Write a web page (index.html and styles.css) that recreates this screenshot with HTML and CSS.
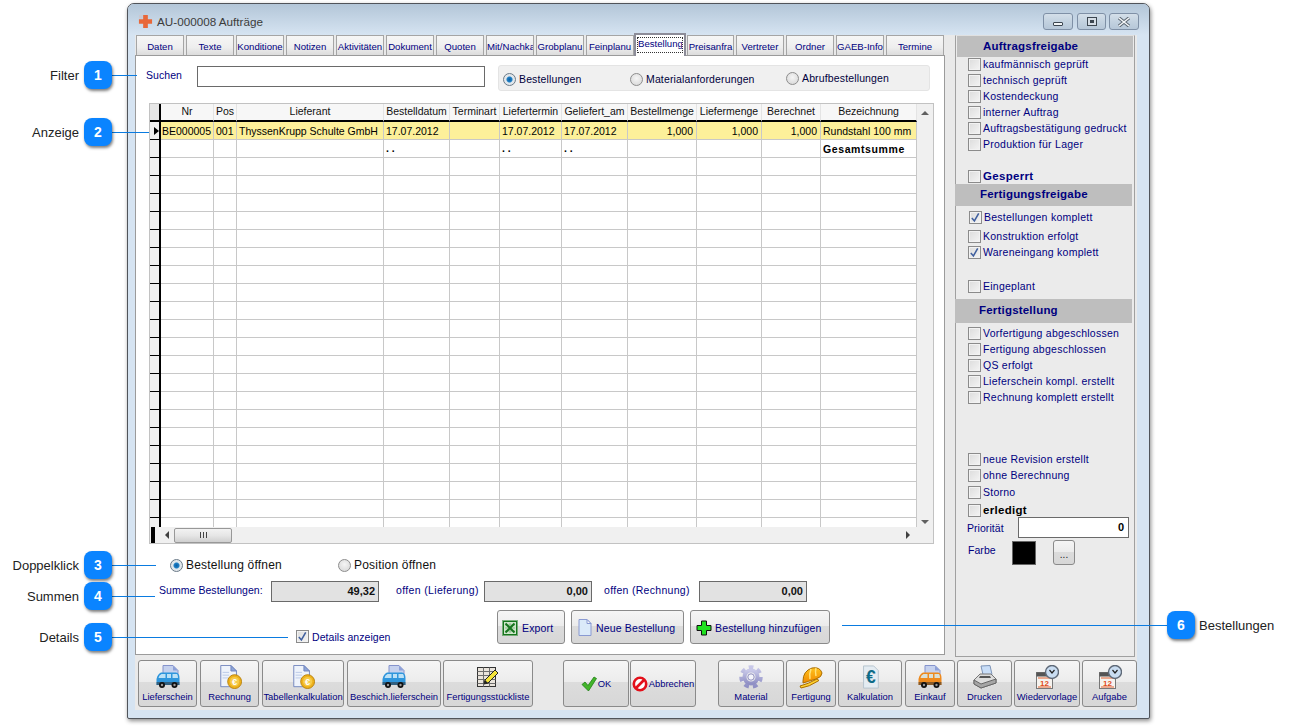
FILE: index.html
```html
<!DOCTYPE html>
<html lang="de">
<head>
<meta charset="utf-8">
<title>AU-000008 Aufträge</title>
<link rel="stylesheet" href="styles.css">
</head>
<body>
<svg class="sprite" aria-hidden="true">
  <defs>
    <linearGradient id="g-gear" x1="0" y1="0" x2="0" y2="1"><stop offset="0" stop-color="#c8c8e8"/><stop offset="1" stop-color="#8f8fc4"/></linearGradient>
    <linearGradient id="g-helmet" x1="0" y1="0" x2="0" y2="1"><stop offset="0" stop-color="#ffc21e"/><stop offset="1" stop-color="#f08a00"/></linearGradient>
  </defs>
  <symbol id="i-van" viewBox="0 0 24 24"><path d="M7 .5h10l5 5v12H7z" fill="#c5d1ee" stroke="#8593cc"/><path d="M17 .5v5h5z" fill="#8ea1d8"/><path d="M.5 14Q1.500 9 5 7.500H20Q23.500 8 23.500 13V20H.5z" fill="currentColor"/><path d="M5.500 9H9.500V13H2.500Q3 10 5.500 9zM11 9h4v4h-4zM16.500 9h4.500q1 1 1 4h-5.500z" fill="#d5eefa" opacity=".85"/><path d="M.5 17h23v3H.5z" fill="#333" opacity=".55"/><circle cx="6" cy="20" r="3" fill="#111"/><circle cx="18.500" cy="20" r="3" fill="#111"/><circle cx="6" cy="20" r="1.200" fill="#999"/><circle cx="18.500" cy="20" r="1.200" fill="#999"/></symbol>
  <symbol id="i-sheet" viewBox="0 0 24 24"><rect x="1.500" y="2.500" width="18" height="19" fill="#e9e4dc" stroke="#333"/><path d="M1.500 6.500h18M1.500 10.500h18M1.500 14.500h18M1.500 18.500h18M7.500 2.500v19M13.500 2.500v19" stroke="#6d6d6d" fill="none"/><path d="M8 19l1-4L19 5l3 3L12 18z" fill="#f2e23a" stroke="#222"/><path d="M8 19l1-4 3 3z" fill="#222"/></symbol>
  <symbol id="i-check" viewBox="0 0 16 16"><path d="M1 8.500l3-2.500 3 3.500L13 1l2.500 1.500L7.500 15z" fill="#43b52a" stroke="#1f7d17" stroke-width=".8"/></symbol>
  <symbol id="i-no" viewBox="0 0 16 16"><circle cx="8" cy="8" r="6.200" fill="#fff" stroke="#e3101a" stroke-width="2.600"/><path d="M3.500 12.500l9-9" stroke="#e3101a" stroke-width="2.600"/></symbol>
  <symbol id="i-gear" viewBox="0 0 24 24"><circle cx="12" cy="12" r="9.500" fill="none" stroke="url(#g-gear)" stroke-width="4.500" stroke-dasharray="4.500 3.960"/><circle cx="12" cy="12" r="6.500" fill="none" stroke="url(#g-gear)" stroke-width="4"/><circle cx="12" cy="12" r="3.200" fill="#f4f4fa" stroke="#8e8ebe"/></symbol>
  <symbol id="i-helmet" viewBox="0 0 24 24"><path d="M4 16Q4 6 13 3Q21 1.500 23 8Q23 12 17 14Q9 16.500 4 18z" fill="url(#g-helmet)" stroke="#a96d00"/><path d="M1 21Q9 19 18 14L20 15.500Q10 22 2 23z" fill="#ffd230" stroke="#a96d00"/><path d="M12 4Q10 9 11 14M17 3Q16 6 17 11" stroke="#ffe27a" stroke-width="1.500" fill="none"/></symbol>
  <symbol id="i-printer" viewBox="0 0 24 24"><path d="M8 1l9-.5 2 9H10z" fill="#c9def8" stroke="#7e95b8"/><path d="M1 15l6-6h11l5 5v4L8 23l-7-4z" fill="#dcdcdc" stroke="#777"/><path d="M1 15l7 4 15-5v4L8 23l-7-4z" fill="#a5a5a5" stroke="#666"/><path d="M7 11h10l1 2H6z" fill="#555"/></symbol>
  <symbol id="i-xls" viewBox="0 0 16 16"><rect x=".5" y=".5" width="15" height="15" fill="#cfe6cc" stroke="#16761e" stroke-dasharray="1 1"/><rect x="1.500" y="1.500" width="13" height="13" fill="none" stroke="#16761e"/><path d="M3 5h10M3 8h10M3 11h10M8 3v10" stroke="#8dbc8d"/><path d="M3.500 3.500l9 9M12.500 3.500l-9 9" stroke="#16761e" stroke-width="2"/></symbol>
  <symbol id="i-page" viewBox="0 0 14 17"><path d="M1 .5h8l4 4v12H1z" fill="#dbeaf9" stroke="#8a9ad2"/><path d="M9 .5v4h4z" fill="#f4f8fd" stroke="#8a9ad2"/></symbol>
  <symbol id="i-plus" viewBox="0 0 16 16"><path d="M5.500 1h5v4.500H15v5h-4.500V15h-5v-4.500H1v-5h4.500z" fill="#1fe21f" stroke="#111"/></symbol>
  <symbol id="i-tick" viewBox="0 0 12 12"><path d="M2 6.500l2.800 3.200L9.500 1.500" fill="none" stroke="#41609f" stroke-width="1.700"/></symbol>
  <symbol id="i-logo" viewBox="0 0 16 16"><path d="M5.500 1h5v4.500H15v5h-4.500V15h-5v-4.500H1v-5h4.500z" fill="#e8683a"/><path d="M1 1h4v4H1z" fill="#c9c9d2"/></symbol>
  <symbol id="i-close" viewBox="0 0 14 10"><path d="M2 1l10 8M12 1L2 9" stroke="#5a6570" stroke-width="3.400" fill="none"/><path d="M2 1l10 8M12 1L2 9" stroke="#f4f6f8" stroke-width="1.600" fill="none"/></symbol>
</svg>

<main class="desktop">
  <section class="window">
    <header class="titlebar">
      <svg class="logo"><use href="#i-logo"/></svg>
      <span class="title">AU-000008 Aufträge</span>
      <div class="winctrls">
        <span class="winbtn"><span class="glyph-min"></span></span>
        <span class="winbtn winbtn-mid"><span class="glyph-max"></span></span>
        <span class="winbtn"><svg class="glyph-close"><use href="#i-close"/></svg></span>
      </div>
    </header>

    <div class="client">
    <div class="main">
      <div class="leftpane">
        <nav class="tabs">
          <span class="tab">Daten</span><span class="tab">Texte</span><span class="tab">Konditione</span><span class="tab">Notizen</span><span class="tab">Aktivitäten</span><span class="tab">Dokument</span><span class="tab">Quoten</span><span class="tab">Mit/Nachka</span><span class="tab">Grobplanu</span><span class="tab">Feinplanu</span><span class="tab tab-active"><span class="tab-focus">Bestellung</span></span><span class="tab tab-after">Preisanfra</span><span class="tab">Vertreter</span><span class="tab">Ordner</span><span class="tab">GAEB-Info</span><span class="tab tab-last">Termine</span>
        </nav>
        <div class="tabpanel">
          <div class="filter">
            <span class="lbl suchen">Suchen</span>
            <span class="input search"></span>
            <div class="radiogroup">
              <span class="radio-item ri1"><span class="radio on"></span><span class="navy-ish">Bestellungen</span></span>
              <span class="radio-item ri2"><span class="radio"></span><span class="navy-ish">Materialanforderungen</span></span>
              <span class="radio-item ri3"><span class="radio"></span><span class="navy-ish">Abrufbestellungen</span></span>
            </div>
          </div>

          <div class="grid">
            <div class="grid-top">
              <div class="grid-clip">
                <table class="table">
                  <colgroup><col class="c-h"><col class="c-nr"><col class="c-pos"><col class="c-lief"><col class="c-bd"><col class="c-ta"><col class="c-lt"><col class="c-ga"><col class="c-bm"><col class="c-lm"><col class="c-be"><col class="c-bz"></colgroup>
                  <thead><tr><th class="rh"></th><th>Nr</th><th>Pos</th><th>Lieferant</th><th>Bestelldatum</th><th>Terminart</th><th>Liefertermin</th><th>Geliefert_am</th><th>Bestellmenge</th><th>Liefermenge</th><th>Berechnet</th><th>Bezeichnung</th></tr></thead>
                  <tbody>
                    <tr class="sel"><td class="rh"><span class="arrow"></span></td><td class="first">BE000005</td><td>001</td><td>ThyssenKrupp Schulte GmbH</td><td>17.07.2012</td><td></td><td>17.07.2012</td><td>17.07.2012</td><td class="num">1,000</td><td class="num">1,000</td><td class="num">1,000</td><td>Rundstahl 100 mm</td></tr>
                    <tr><td class="rh"></td><td></td><td></td><td></td><td class="dots">. .</td><td></td><td class="dots">. .</td><td class="dots">. .</td><td></td><td></td><td></td><td class="total">Gesamtsumme</td></tr>
                    <tr><td class="rh"></td><td></td><td></td><td></td><td></td><td></td><td></td><td></td><td></td><td></td><td></td><td></td></tr>
                    <tr><td class="rh"></td><td></td><td></td><td></td><td></td><td></td><td></td><td></td><td></td><td></td><td></td><td></td></tr>
                    <tr><td class="rh"></td><td></td><td></td><td></td><td></td><td></td><td></td><td></td><td></td><td></td><td></td><td></td></tr>
                    <tr><td class="rh"></td><td></td><td></td><td></td><td></td><td></td><td></td><td></td><td></td><td></td><td></td><td></td></tr>
                    <tr><td class="rh"></td><td></td><td></td><td></td><td></td><td></td><td></td><td></td><td></td><td></td><td></td><td></td></tr>
                    <tr><td class="rh"></td><td></td><td></td><td></td><td></td><td></td><td></td><td></td><td></td><td></td><td></td><td></td></tr>
                    <tr><td class="rh"></td><td></td><td></td><td></td><td></td><td></td><td></td><td></td><td></td><td></td><td></td><td></td></tr>
                    <tr><td class="rh"></td><td></td><td></td><td></td><td></td><td></td><td></td><td></td><td></td><td></td><td></td><td></td></tr>
                    <tr><td class="rh"></td><td></td><td></td><td></td><td></td><td></td><td></td><td></td><td></td><td></td><td></td><td></td></tr>
                    <tr><td class="rh"></td><td></td><td></td><td></td><td></td><td></td><td></td><td></td><td></td><td></td><td></td><td></td></tr>
                    <tr><td class="rh"></td><td></td><td></td><td></td><td></td><td></td><td></td><td></td><td></td><td></td><td></td><td></td></tr>
                    <tr><td class="rh"></td><td></td><td></td><td></td><td></td><td></td><td></td><td></td><td></td><td></td><td></td><td></td></tr>
                    <tr><td class="rh"></td><td></td><td></td><td></td><td></td><td></td><td></td><td></td><td></td><td></td><td></td><td></td></tr>
                    <tr><td class="rh"></td><td></td><td></td><td></td><td></td><td></td><td></td><td></td><td></td><td></td><td></td><td></td></tr>
                    <tr><td class="rh"></td><td></td><td></td><td></td><td></td><td></td><td></td><td></td><td></td><td></td><td></td><td></td></tr>
                    <tr><td class="rh"></td><td></td><td></td><td></td><td></td><td></td><td></td><td></td><td></td><td></td><td></td><td></td></tr>
                    <tr><td class="rh"></td><td></td><td></td><td></td><td></td><td></td><td></td><td></td><td></td><td></td><td></td><td></td></tr>
                    <tr><td class="rh"></td><td></td><td></td><td></td><td></td><td></td><td></td><td></td><td></td><td></td><td></td><td></td></tr>
                    <tr><td class="rh"></td><td></td><td></td><td></td><td></td><td></td><td></td><td></td><td></td><td></td><td></td><td></td></tr>
                    <tr><td class="rh"></td><td></td><td></td><td></td><td></td><td></td><td></td><td></td><td></td><td></td><td></td><td></td></tr>
                    <tr><td class="rh"></td><td></td><td></td><td></td><td></td><td></td><td></td><td></td><td></td><td></td><td></td><td></td></tr>
                  </tbody>
                </table>
              </div>
              <div class="vscroll"><span class="tri tri-up"></span><span class="tri tri-down"></span></div>
            </div>
            <div class="hscroll">
              <span class="hs-block"></span>
              <span class="tri tri-left"></span>
              <span class="thumb"><span class="grip"></span></span>
              <span class="tri tri-right"></span>
            </div>
          </div>

          <div class="dbl">
            <span class="dbl-item di1"><span class="radio on"></span>Bestellung öffnen</span>
            <span class="dbl-item"><span class="radio"></span>Position öffnen</span>
          </div>

          <div class="sums">
            <span class="lbl s-l1">Summe Bestellungen:</span>
            <span class="sumbox">49,32</span>
            <span class="lbl s-l2">offen (Lieferung)</span>
            <span class="sumbox">0,00</span>
            <span class="lbl s-l3">offen (Rechnung)</span>
            <span class="sumbox">0,00</span>
          </div>

          <div class="actions">
            <span class="details"><span class="cb"><svg class="tick"><use href="#i-tick"/></svg></span><span class="lbl">Details anzeigen</span></span>
            <span class="btn act a-export"><svg class="ico16"><use href="#i-xls"/></svg>Export</span>
            <span class="btn act a-new"><svg class="ico-page"><use href="#i-page"/></svg>Neue Bestellung</span>
            <span class="btn act a-add"><svg class="ico16"><use href="#i-plus"/></svg>Bestellung hinzufügen</span>
          </div>
        </div>
      </div>

      <aside class="side">
        <h3 class="sh sh1">Auftragsfreigabe</h3>
        <div class="cbrow up1"><span class="cb"></span>kaufmännisch geprüft</div>
        <div class="cbrow"><span class="cb"></span>technisch geprüft</div>
        <div class="cbrow"><span class="cb"></span>Kostendeckung</div>
        <div class="cbrow"><span class="cb"></span>interner Auftrag</div>
        <div class="cbrow"><span class="cb"></span>Auftragsbestätigung gedruckt</div>
        <div class="cbrow"><span class="cb"></span>Produktion für Lager</div>
        <div class="cbrow big m16"><span class="cb"></span>Gesperrt</div>
        <h3 class="sh sh2">Fertigungsfreigabe</h3>
        <div class="cbrow ind m3"><span class="cb"><svg class="tick"><use href="#i-tick"/></svg></span>Bestellungen komplett</div>
        <div class="cbrow m3"><span class="cb"></span>Konstruktion erfolgt</div>
        <div class="cbrow"><span class="cb"><svg class="tick"><use href="#i-tick"/></svg></span>Wareneingang komplett</div>
        <div class="cbrow m18"><span class="cb"></span>Eingeplant</div>
        <h3 class="sh sh3">Fertigstellung</h3>
        <div class="cbrow m2"><span class="cb"></span>Vorfertigung abgeschlossen</div>
        <div class="cbrow"><span class="cb"></span>Fertigung abgeschlossen</div>
        <div class="cbrow"><span class="cb"></span>QS erfolgt</div>
        <div class="cbrow"><span class="cb"></span>Lieferschein kompl. erstellt</div>
        <div class="cbrow"><span class="cb"></span>Rechnung komplett erstellt</div>
        <div class="cbrow m46"><span class="cb"></span>neue Revision erstellt</div>
        <div class="cbrow"><span class="cb"></span>ohne Berechnung</div>
        <div class="cbrow m1"><span class="cb"></span>Storno</div>
        <div class="cbrow big black m2"><span class="cb"></span>erledigt</div>
        <div class="prio"><span class="lbl">Priorität</span><span class="input prio-in">0</span></div>
        <div class="farbe"><span class="lbl">Farbe</span><span class="swatch"></span><span class="btn more">...</span></div>
      </aside>
    </div>

    <footer class="toolbar">
      <span class="btn tb w59 van-blue"><svg class="tico"><use href="#i-van"/></svg>Lieferschein</span>
      <span class="btn tb w59 g3"><svg class="tico" viewBox="0 0 24 26"><path d="M2 .5h11l6 6v17H2z" fill="#eef3fb" stroke="#6f83bd"/><path d="M13 .5v6h6z" fill="#8ea6d9" stroke="#6f83bd"/><path d="M4 8h7M4 11h7M4 14h6" stroke="#b9c8e6"/><circle cx="17" cy="18" r="7.500" fill="#eeb21c" stroke="#b77f08"/><circle cx="17" cy="18" r="5" fill="#f6cb4a"/><text x="17" y="21.500" class="svg-euro">€</text></svg>Rechnung</span>
      <span class="btn tb w82 g3"><svg class="tico" viewBox="0 0 24 26"><path d="M2 .5h11l6 6v17H2z" fill="#eef3fb" stroke="#6f83bd"/><path d="M13 .5v6h6z" fill="#8ea6d9" stroke="#6f83bd"/><path d="M4 8h7M4 11h7M4 14h6" stroke="#b9c8e6"/><circle cx="17" cy="18" r="7.500" fill="#eeb21c" stroke="#b77f08"/><circle cx="17" cy="18" r="5" fill="#f6cb4a"/><text x="17" y="21.500" class="svg-euro">€</text></svg>Tabellenkalkulation</span>
      <span class="btn tb w94 g3 van-blue"><svg class="tico"><use href="#i-van"/></svg>Beschich.lieferschein</span>
      <span class="btn tb w90"><svg class="tico"><use href="#i-sheet"/></svg>Fertigungsstückliste</span>
      <span class="btn tb tb-row w66 push-ok"><svg class="ico16"><use href="#i-check"/></svg>OK</span>
      <span class="btn tb tb-row w66"><svg class="ico16"><use href="#i-no"/></svg>Abbrechen</span>
      <span class="btn tb w66 push-mat"><svg class="tico"><use href="#i-gear"/></svg>Material</span>
      <span class="btn tb w50"><svg class="tico"><use href="#i-helmet"/></svg>Fertigung</span>
      <span class="btn tb w64"><svg class="tico" viewBox="0 0 24 26"><path d="M5 1h11l5 5v19H5z" fill="#e4ecf2" stroke="#b4c2cc"/><text x="13" y="20" class="svg-euro-big">€</text></svg>Kalkulation</span>
      <span class="btn tb w50 g3 van-orange"><svg class="tico"><use href="#i-van"/></svg>Einkauf</span>
      <span class="btn tb w55"><svg class="tico"><use href="#i-printer"/></svg>Drucken</span>
      <span class="btn tb w66"><svg class="tico" viewBox="0 0 24 24"><rect x="1.500" y="7.500" width="16" height="16" fill="#f6f3ef" stroke="#777"/><rect x="1.500" y="7.500" width="16" height="4" fill="#555"/><path d="M3 13h13M3 22h13" stroke="#e06030"/><text x="9.500" y="21" class="svg-cal">12</text><circle cx="17" cy="7" r="6.500" fill="#c9ddf2" stroke="#5f6a78" stroke-width="1.400"/><path d="M14.500 5l2.500 3 2.500-3" fill="none" stroke="#222" stroke-width="1.200"/></svg>Wiedervorlage</span>
      <span class="btn tb w55"><svg class="tico" viewBox="0 0 24 24"><rect x="1.500" y="7.500" width="16" height="16" fill="#f6f3ef" stroke="#777"/><rect x="1.500" y="7.500" width="16" height="4" fill="#555"/><path d="M3 13h13M3 22h13" stroke="#e06030"/><text x="9.500" y="21" class="svg-cal">12</text><circle cx="17" cy="7" r="6.500" fill="#c9ddf2" stroke="#5f6a78" stroke-width="1.400"/><path d="M14.500 5l2.500 3 2.500-3" fill="none" stroke="#222" stroke-width="1.200"/></svg>Aufgabe</span>
    </footer>
    </div>
  </section>

  <div class="callout co1"><span class="co-label">Filter</span><span class="badge">1</span><span class="co-line"></span></div>
  <div class="callout co2"><span class="co-label">Anzeige</span><span class="badge">2</span><span class="co-line"></span></div>
  <div class="callout co3"><span class="co-label">Doppelklick</span><span class="badge">3</span><span class="co-line"></span></div>
  <div class="callout co4"><span class="co-label">Summen</span><span class="badge">4</span><span class="co-line"></span></div>
  <div class="callout co5"><span class="co-label">Details</span><span class="badge">5</span><span class="co-line"></span></div>
  <div class="callout-right"><span class="co-line"></span><span class="badge">6</span><span class="co-label-r">Bestellungen</span></div>
</main>
</body>
</html>
```

FILE: styles.css
```css
* { box-sizing: border-box; }
html, body { margin: 0; padding: 0; background: #fff; }
body { font: 10.500px "Liberation Sans", Arial, sans-serif; color: #000; overflow: hidden; }
.sprite { position: absolute; width: 0; height: 0; overflow: hidden; }
.desktop { position: relative; width: 1290px; height: 727px; overflow: hidden; }

.svg-euro { font: bold 10px "Liberation Sans", sans-serif; fill: #fff; text-anchor: middle; }
.svg-euro-big { font: bold 19px "Liberation Sans", sans-serif; fill: #0e6b87; text-anchor: middle; }
.svg-cal { font: bold 8px "Liberation Sans", sans-serif; fill: #e04a1a; text-anchor: middle; }

/* window */
.window {
  position: absolute; left: 127px; top: 3px; width: 1023px; height: 716px;
  display: flex; flex-direction: column;
  border: 1px solid #50545a; border-radius: 7px 7px 2px 2px;
  background: #d6e4f2;
  box-shadow: 1px 2px 4px rgba(0,0,0,.45);
}
.titlebar {
  height: 31px; flex: none; display: flex; align-items: center;
  padding: 4px 10px 0 10px; border-radius: 6px 6px 0 0;
  background: linear-gradient(#b3c6d8, #d6e4f2);
}
.logo { width: 15px; height: 15px; margin-right: 4px; }
.title { font-size: 11.700px; color: #3c3c3c; }
.winctrls { margin-left: auto; display: flex; gap: 3px; }
.winbtn {
  width: 30px; height: 17px; display: flex; align-items: center; justify-content: center;
  border: 1px solid #7f90a6; border-radius: 3px;
  background: linear-gradient(#d4dfe9, #c3d2e0 50%, #b6c7d8);
}
.winbtn-mid { width: 29px; margin-left: 1px; }
.glyph-min { width: 10px; height: 4px; border: 1px solid #3c4650; background: #f2f4f6; margin-top: 4px; border-radius: 1px; }
.glyph-max { width: 10px; height: 9px; border: 1px solid #3c4650; background: #e8eef3; box-shadow: inset 0 0 0 2px #d5dde5, inset 0 0 0 4px #3c4650; }
.glyph-close { width: 14px; height: 10px; }

.client { flex: none; width: 1002px; height: 675px; margin-left: 7px; background: #e9e9e9; display: flex; flex-direction: column; }
.main { height: 622px; flex: none; display: flex; align-items: stretch; }
.leftpane { width: 810px; display: flex; flex-direction: column; }

/* tabs */
.tabs { height: 20px; flex: none; display: flex; align-items: flex-end; padding-left: 1px; }
.tab {
  width: 48px; height: 20px; margin-right: 2px; flex: none;
  padding: 4px 0 0; overflow: hidden; white-space: nowrap; text-align: center;
  font-size: 9.600px; line-height: 13px; color: #000080;
  border: 1px solid #a5a5a5; border-bottom: 0;
  background: linear-gradient(#f6f6f6, #eeeeee 60%, #dcdcdc);
}
.tab-active {
  position: relative; z-index: 1; width: 52px; height: 23px; margin: 0 1px -1px -2px;
  padding: 3px 2px 0; background: #fff; border: 2px solid #8c8c98; border-bottom: 0;
}
.tab-focus { display: block; height: 14px; overflow: hidden; outline: 1px dotted #333; line-height: 12px; }
.tab-after { width: 47px; }
.tab-last { width: 58px; margin-right: 0; }

.tabpanel {
  height: 600px; flex: none; background: #fff; border: 1px solid #9b9b9b;
  padding: 10px 0 0 0; display: flex; flex-direction: column;
}
.lbl { color: #000080; font-size: 10.500px; letter-spacing: .05px; white-space: nowrap; }

/* filter */
.filter { display: flex; align-items: flex-start; height: 26px; }
.suchen { margin: 3px 0 0 10px; width: 51px; }
.input { display: block; background: #fff; border: 1px solid #6a6a6a; }
.search { width: 288px; height: 21px; }
.radiogroup {
  width: 432px; height: 26px; margin: -1px 0 0 13px; position: relative; padding-top: 2px;
  display: flex; align-items: center;
  border: 1px solid #e4e4e4; border-radius: 3px; background: #f0f0f0;
}
.radio-item { display: flex; align-items: center; gap: 3px; font-size: 10.500px; }
.navy-ish { color: #00003c; letter-spacing: .14px; }
.ri1 { margin-left: 4px; width: 127px; }
.ri2 { width: 156px; }
.ri3 { margin-top: -2px; }
.radio {
  width: 13px; height: 13px; flex: none; border-radius: 50%; display: block;
  border: 1px solid #8d8d8d;
  background: radial-gradient(circle at 50% 40%, #f5f5f5, #d4d4d4);
}
.radio.on { background: radial-gradient(circle, #0b5fa5 0, #1f7fc4 2.500px, #dfe6ec 3.500px, #e8e8e8 100%); border-color: #6a7a88; }

/* grid */
.grid {
  width: 785px; height: 441px; margin: 11px 0 0 13px; flex: none;
  display: flex; flex-direction: column; border: 1px solid #c2c2c2; background: #f0f0f0;
}
.grid-top { height: 423px; flex: none; display: flex; }
.grid-clip { width: 767px; overflow: hidden; background: #fff; }
.table { border-collapse: separate; border-spacing: 0; table-layout: fixed; width: 767px; font-size: 10.500px; }
.c-h { width: 11px; } .c-nr { width: 53px; } .c-pos { width: 23px; } .c-lief { width: 147px; }
.c-bd { width: 66px; } .c-ta { width: 50px; } .c-lt { width: 62px; } .c-ga { width: 66px; }
.c-bm { width: 69px; } .c-lm { width: 65px; } .c-be { width: 59px; } .c-bz { width: 96px; }
.table th, .table td {
  height: 18px; padding: 0 2px; overflow: hidden; white-space: nowrap;
  border-right: 1px solid #c8c8c8; border-bottom: 1px solid #c8c8c8;
  font-weight: normal;
}
.table th { height: 18px; text-align: center; background: #f7f7f7; color: #111; padding: 0 1px 2px; border-right-color: #e4e4e4; border-bottom: 2px solid #000; }
.table th.rh, .table td.rh { background: #f0f0f0; border-right: 2px solid #000; padding: 0; border-bottom-color: #000; }
.table th.rh { border-bottom: 2px solid #000; background: #e6e6e6; }
.table td.first { padding-left: 1px; }
.sel td { background: #fdf09a; }
.num { text-align: right; padding-right: 3px !important; }
.dots { font-weight: bold !important; vertical-align: top; padding-top: 2px !important; line-height: 12px; }
.total { font-weight: bold !important; letter-spacing: .6px; }
.arrow { display: block; margin-left: 4px; width: 0; height: 0; border: 4px solid transparent; border-left: 5px solid #000; border-right: 0; }
.vscroll { width: 16px; flex: 1; background: #f0f0f0; display: flex; flex-direction: column; justify-content: space-between; align-items: center; padding: 7px 0 3px; }
.tri { display: block; width: 0; height: 0; border: 4px solid transparent; }
.tri-up { border-top: 0; border-bottom: 4px solid #606060; }
.tri-down { border-bottom: 0; border-top: 4px solid #606060; }
.tri-left { border-left: 0; border-right: 4px solid #404040; }
.tri-right { border-right: 0; border-left: 4px solid #404040; }
.hscroll { height: 16px; display: flex; align-items: center; background: #f0f0f0; padding-left: 1px; }
.hs-block { width: 4px; height: 16px; background: #000; margin-right: 10px; }
.thumb {
  width: 58px; height: 15px; margin-left: 5px; display: flex; justify-content: center; align-items: center;
  border: 1px solid #989898; border-radius: 2px;
  background: linear-gradient(#f2f2f2, #e6e6e6 50%, #cfcfcf);
}
.grip { width: 7px; height: 6px; background: repeating-linear-gradient(90deg, #444 0 1px, transparent 1px 3px); }
.tri-right { margin-left: auto; margin-right: 23px; }

/* double click radios */
.dbl { display: flex; align-items: center; height: 14px; margin: 14px 0 0 34px; font-size: 12px; letter-spacing: .2px; color: #111; }
.dbl-item { display: flex; align-items: center; gap: 3px; }
.di1 { width: 168px; }

/* sums */
.sums { display: flex; align-items: center; height: 21px; margin: 9px 0 0 23px; }
.sumbox {
  width: 108px; height: 21px; flex: none; text-align: right; padding: 3px 3px 0 0;
  font-weight: bold; font-size: 11px; color: #111;
  background: #e2e2e2; border: 1px solid #6a6a6a;
}
.s-l1 { width: 112px; margin-top: -3px; }
.s-l2 { margin: -3px 5px 0 17px; width: 83px; letter-spacing: .35px; }
.s-l3 { margin: -3px 9px 0 12px; width: 86px; letter-spacing: .3px; }

/* buttons */
.btn {
  display: flex; color: #000080; white-space: nowrap; font-size: 10.500px;
  border: 1px solid #8a8a8a; border-radius: 3px;
  background: linear-gradient(#f5f5f5, #ececec 46%, #dcdcdc 47%, #d7d7d7);
}
.actions { display: flex; align-items: flex-start; height: 34px; margin: 8px 0 0 160px; }
.details { display: flex; align-items: center; gap: 3px; width: 201px; margin-top: 20px; }
.act { height: 34px; align-items: center; letter-spacing: .15px; padding-top: 1px; }
.a-export { width: 68px; padding-left: 4px; gap: 4px; }
.a-new { width: 113px; margin-left: 6px; padding-left: 6px; gap: 4px; }
.a-add { width: 140px; margin-left: 6px; padding-left: 5px; gap: 3px; }
.ico16 { width: 16px; height: 16px; flex: none; }
.ico-page { width: 14px; height: 17px; flex: none; }

/* checkbox */
.cb {
  width: 13px; height: 13px; flex: none; display: block; position: relative;
  border: 1px solid #8b8b8b;
  background: linear-gradient(135deg, #dcdcdc, #f4f4f4);
  box-shadow: inset 0 0 0 1px #f2f2f2;
}
.tick { position: absolute; left: 0; top: 0; width: 11px; height: 11px; }

/* sidebar */
.side {
  width: 180px; margin-left: 10px; flex: none; height: 622px;
  background: #ebebeb; border: 1px solid #a0a0a0; border-top-color: #e0e0e0;
  display: flex; flex-direction: column; padding-top: 0;
}
.sh { margin: 0; color: #000080; font-size: 11.500px; font-weight: bold; letter-spacing: .2px; background: #bebebe; flex: none; display: flex; align-items: center; padding-bottom: 2px; }
.sh1 { height: 21px; width: 176px; margin-left: 1px; padding-left: 26px; }
.sh2 { height: 22px; width: 177px; margin-left: -1px; padding-left: 25px; padding-bottom: 3px; }
.sh3 { height: 24px; width: 177px; margin: 5px 0 0 -1px; padding-left: 24px; }
.cbrow { height: 16px; flex: none; display: flex; align-items: center; gap: 2px; padding-left: 12px; color: #000080; font-size: 10.500px; letter-spacing: .25px; white-space: nowrap; }
.up1 { margin-top: -1px; }
.big { font-size: 11.500px; font-weight: bold; letter-spacing: .3px; }
.black { color: #000; }
.ind { padding-left: 13px; }
.m1 { margin-top: 1px; } .m2 { margin-top: 2px; } .m3 { margin-top: 3px; } .m16 { margin-top: 16px; } .m18 { margin-top: 18px; } .m46 { margin-top: 46px; }
.prio { display: flex; align-items: center; height: 21px; margin-top: -1px; padding-left: 11px; }
.prio .lbl { width: 51px; }
.prio-in { width: 111px; height: 21px; text-align: right; font-weight: bold; font-size: 11px; padding: 3px 4px 0 0; }
.farbe { display: flex; align-items: center; height: 25px; margin-top: 2px; padding-left: 12px; }
.farbe .lbl { width: 44px; margin-top: -5px; }
.swatch { width: 24px; height: 24px; background: #000; border: 1px solid #666; }
.more { width: 22px; height: 25px; margin-left: 17px; align-items: flex-end; justify-content: center; color: #222; padding-bottom: 4px; font-size: 10px; }

/* toolbar */
.toolbar { height: 47px; flex: none; margin-top: 3px; display: flex; gap: 2px; padding-left: 3px; position: relative; z-index: 1; }
.tb { height: 47px; flex: none; flex-direction: column; align-items: center; justify-content: flex-end; padding-bottom: 3px; font-size: 9.400px; line-height: 12px; overflow: hidden; }
.tico { width: 24px; height: 24px; margin-bottom: 2px; flex: none; }
.tb-row { flex-direction: row; justify-content: center; padding: 0; gap: 1px; align-items: center; }
.g3 { margin-left: 1px; }
.w50 { width: 50px; } .w55 { width: 55px; } .w59 { width: 59px; } .w64 { width: 64px; } .w66 { width: 66px; }
.w82 { width: 82px; } .w90 { width: 90px; } .w94 { width: 94px; }
.push-ok { margin-left: 28px; }
.tb-row + .tb-row { margin-left: -1px; }
.push-mat { margin-left: 20px; }
.van-blue .tico { color: #2f96dc; }
.van-orange .tico { color: #ee8a1e; }

/* callouts */
.callout { position: absolute; left: 0; display: flex; align-items: center; height: 28px; }
.co-label { width: 79px; margin-right: 5px; text-align: right; font-size: 13px; color: #222; }
.badge {
  width: 28px; height: 28px; flex: none; display: flex; align-items: center; justify-content: center;
  border-radius: 8px; background: #0a84ff; color: #fff; font: bold 14px "Liberation Sans", sans-serif;
  box-shadow: 1px 2px 3px rgba(0,0,0,.5); position: relative; z-index: 1;
}
.co-line { display: block; height: 1px; background: #0a7be0; }
.co1 { top: 61px; } .co1 .co-line { width: 25px; }
.co2 { top: 118px; } .co2 .co-line { width: 37px; }
.co3 { top: 551px; } .co3 .co-line { width: 44px; }
.co4 { top: 582px; } .co4 .co-line { width: 43px; }
.co5 { top: 623px; } .co5 .co-line { width: 176px; }
.callout-right { position: absolute; left: 842px; top: 611px; height: 28px; display: flex; align-items: center; }
.callout-right .co-line { width: 325px; }
.co-label-r { margin-left: 4px; font-size: 13px; color: #222; }
```
